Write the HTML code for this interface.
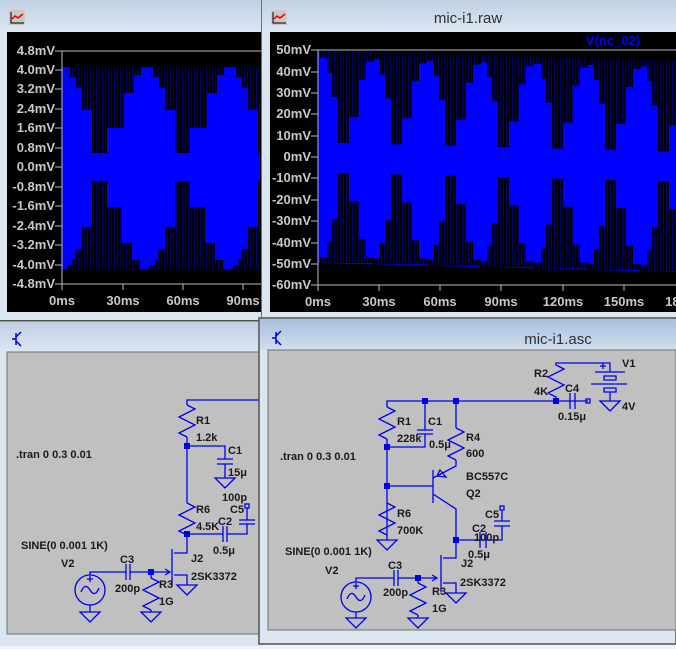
<!DOCTYPE html>
<html><head><meta charset="utf-8"><style>
html,body{margin:0;padding:0;background:#eef2f6;}
svg{display:block}
.pl{font-family:"Liberation Sans",sans-serif;font-weight:bold;font-size:13px;fill:#c8c8c8;}
.sl{font-family:"Liberation Sans",sans-serif;font-weight:bold;font-size:11px;fill:#1a1a1a;}
.t{font-family:"Liberation Sans",sans-serif;font-size:15px;fill:#303030;}
.w{stroke:#0000ee;stroke-width:1.3;fill:none}
</style></head><body>
<svg width="676" height="649" viewBox="0 0 676 649" xmlns="http://www.w3.org/2000/svg">
<defs>
<linearGradient id="tb" x1="0" y1="0" x2="0" y2="1"><stop offset="0" stop-color="#c0d0e2"/><stop offset="1" stop-color="#dde7f2"/></linearGradient>
<linearGradient id="tb2" x1="0" y1="0" x2="0" y2="1"><stop offset="0" stop-color="#a8bfdb"/><stop offset="1" stop-color="#d2e0ef"/></linearGradient>
<pattern id="st" width="3" height="4" patternUnits="userSpaceOnUse"><rect width="3" height="4" fill="#000"/><rect x="2" width="1" height="4" fill="#000070"/></pattern>
<path id="lt" d="M0,0 V10 H6 V21 H12 V43 H22 V86 H37 V61 H54 V26 H64 V8 H71 V0Z" fill="url(#st)"/>
<path id="lb" d="M0,0 V-4 H5 V-10 H8 V-20 H15 V-42 H25 V-88 H40 V-62 H55 V-26 H65 V-9 H73 V0Z" fill="url(#st)"/>
<path id="rt" d="M0,0 V6 H7 V21 H12 V45 H18 V91 H29 V65 H39 V28 H46 V10 H54 V0Z" fill="url(#st)"/>
<path id="rb" d="M0,0 V-6 H7 V-21 H12 V-44 H18 V-90 H29 V-62 H39 V-24 H46 V-6 H54 V0Z" fill="url(#st)"/>
<path id="res" d="M0,0 l8,4 l-16,8 l16,8 l-16,8 l8,4" class="w"/>
<path id="gnd" d="M-10,0 H10 L0,10 Z" class="w"/>
</defs>

<!-- TOP LEFT WINDOW -->
<rect x="0" y="0" width="263" height="320" fill="#dce6f1"/>
<rect x="0" y="0" width="263" height="32" fill="url(#tb)"/>
<g transform="translate(9,10)"><rect width="16" height="15" fill="#c8c8c8"/><path d="M2,2 V13 H15" stroke="#000" fill="none"/><path d="M3,9 L6,6 L9,8 L14,4" stroke="#e00" stroke-width="1.5" fill="none"/></g>
<rect x="7" y="32" width="256" height="280" fill="#000"/>
<rect x="62" y="67" width="198" height="202" fill="#0000ff"/>
<use href="#lt" x="70" y="67"/><use href="#lt" x="153" y="67"/><use href="#lt" x="236" y="67"/>
<use href="#lb" x="67" y="269"/><use href="#lb" x="150" y="269"/><use href="#lb" x="233" y="269"/>
<rect x="260" y="32" width="3" height="280" fill="#000"/>
<path d="M62,51 H262 M62,51 V289" stroke="#bbb" fill="none"/>
<g stroke="#bbb"><path d="M55,51H62M55,70H62M55,89H62M55,109H62M55,128H62M55,148H62M55,167H62M55,187H62M55,206H62M55,226H62M55,245H62M55,265H62M55,284H262M62,284V290M123,284V290M183,284V290M243,284V290"/></g>
<g class="pl" text-anchor="end">
<text x="55" y="55">4.8mV</text><text x="55" y="74">4.0mV</text><text x="55" y="93">3.2mV</text><text x="55" y="113">2.4mV</text><text x="55" y="132">1.6mV</text><text x="55" y="152">0.8mV</text><text x="55" y="171">0.0mV</text><text x="55" y="191">-0.8mV</text><text x="55" y="210">-1.6mV</text><text x="55" y="230">-2.4mV</text><text x="55" y="249">-3.2mV</text><text x="55" y="269">-4.0mV</text><text x="55" y="288">-4.8mV</text>
</g>
<g class="pl" text-anchor="middle"><text x="62" y="305">0ms</text><text x="123" y="305">30ms</text><text x="183" y="305">60ms</text><text x="243" y="305">90ms</text></g>

<!-- TOP RIGHT WINDOW -->
<rect x="261" y="0" width="415" height="320" fill="#dce6f1"/>
<rect x="261" y="0" width="1" height="320" fill="#707070"/>
<rect x="262" y="0" width="414" height="32" fill="url(#tb)"/>
<g transform="translate(271,10)"><rect width="16" height="15" fill="#c8c8c8"/><path d="M2,2 V13 H15" stroke="#000" fill="none"/><path d="M3,9 L6,6 L9,8 L14,4" stroke="#e00" stroke-width="1.5" fill="none"/></g>
<text class="t" x="468" y="23" text-anchor="middle">mic-i1.raw</text>
<rect x="270" y="32" width="406" height="280" fill="#000"/>
<polygon points="318,52 676,61 676,272 318,263" fill="#0000ff"/>
<use href="#rt" x="320" y="52"/><use href="#rt" x="373" y="53.4"/><use href="#rt" x="427" y="54.8"/><use href="#rt" x="480" y="56.2"/><use href="#rt" x="534" y="57.6"/><use href="#rt" x="587" y="59"/><use href="#rt" x="640" y="60.4"/>
<use href="#rb" x="320" y="263"/><use href="#rb" x="373" y="264.4"/><use href="#rb" x="427" y="265.8"/><use href="#rb" x="480" y="267.2"/><use href="#rb" x="534" y="268.6"/><use href="#rb" x="587" y="270"/><use href="#rb" x="640" y="271.4"/>
<text x="640" y="45" text-anchor="end" style="font-family:'Liberation Sans',sans-serif;font-weight:bold;font-size:13px;fill:#0000ff">V(nc_02)</text>
<path d="M318,50 H676 M318,50 V291" stroke="#bbb" fill="none"/>
<g stroke="#bbb"><path d="M311,50H318M311,72H318M311,93H318M311,114H318M311,136H318M311,157H318M311,178H318M311,200H318M311,221H318M311,243H318M311,264H318M311,285H676M318,285V291M379,285V291M440,285V291M501,285V291M563,285V291M624,285V291"/></g>
<g class="pl" text-anchor="end">
<text x="311" y="54">50mV</text><text x="311" y="76">40mV</text><text x="311" y="97">30mV</text><text x="311" y="118">20mV</text><text x="311" y="140">10mV</text><text x="311" y="161">0mV</text><text x="311" y="182">-10mV</text><text x="311" y="204">-20mV</text><text x="311" y="225">-30mV</text><text x="311" y="247">-40mV</text><text x="311" y="268">-50mV</text><text x="311" y="289">-60mV</text>
</g>
<g class="pl" text-anchor="middle"><text x="318" y="306">0ms</text><text x="379" y="306">30ms</text><text x="440" y="306">60ms</text><text x="501" y="306">90ms</text><text x="563" y="306">120ms</text><text x="624" y="306">150ms</text><text x="676" y="306">180</text></g>

<!-- BOTTOM LEFT WINDOW -->
<rect x="0" y="320" width="262" height="326" fill="#dce6f1"/>
<rect x="0" y="320" width="262" height="1.5" fill="#505050"/>
<rect x="0" y="322" width="262" height="31" fill="url(#tb)"/>
<g stroke="#0000dd" stroke-width="1.5" fill="none"><path d="M16,333V345M12,339H16M16,337L21,332M16,341L21,346"/></g>
<rect x="7" y="352" width="255" height="282" fill="#c0c0c0" stroke="#707070"/>
<g class="w">
<path d="M262,400 H187 V405"/><use href="#res" x="187" y="405"/><path d="M187,437 V503"/>
<path d="M187,446 H225 V459 M217,459 H233 M217,464 H233 M225,464 V478"/><use href="#gnd" x="225" y="478"/>
<use href="#res" x="187" y="503"/><path d="M187,535 V553 H174 M172,549 V585 M174,575 H187 V585"/><use href="#gnd" x="187" y="585"/>
<path d="M187,534 H223 M223,526 V542 M227,526 V542 M227,534 H247 V524 M239,524 H255 M239,520 H255 M247,520 V508"/>
<rect x="245" y="504" width="4" height="4"/>
<path d="M90,575 V572 H126 M126,564 V580 M130,564 V580 M130,572 H170 M165,569 L170,572 L165,575"/>
<path d="M151,572 V578"/><use href="#res" x="151" y="578"/><path d="M151,610 V612"/><use href="#gnd" x="151" y="612"/>
<circle cx="90" cy="590" r="15"/><path d="M81,592 Q85,582 90,590 T99,588 M90,605 V612 M87,579 H93 M90,576 V582"/><use href="#gnd" x="90" y="612"/>
</g>
<g fill="#0000ee"><rect x="184" y="443" width="6" height="6"/><rect x="184" y="531" width="6" height="6"/><rect x="148" y="569" width="6" height="6"/></g>
<g class="sl">
<text x="196" y="424">R1</text><text x="196" y="441">1.2k</text><text x="228" y="454">C1</text><text x="228" y="476">15μ</text>
<text x="196" y="513">R6</text><text x="196" y="530">4.5K</text><text x="222" y="501">100p</text><text x="230" y="513">C5</text><text x="218" y="525">C2</text><text x="213" y="554">0.5μ</text>
<text x="191" y="562">J2</text><text x="191" y="580">2SK3372</text><text x="120" y="563">C3</text><text x="115" y="592">200p</text><text x="159" y="588">R3</text><text x="159" y="605">1G</text>
<text x="61" y="567">V2</text><text x="21" y="549">SINE(0 0.001 1K)</text><text x="16" y="458">.tran 0 0.3 0.01</text>
</g>

<!-- BOTTOM RIGHT WINDOW -->
<rect x="259" y="318" width="417" height="326" fill="#dce6f1"/>
<rect x="259" y="318" width="417" height="326" fill="none" stroke="#505050" stroke-width="1.5"/>
<rect x="260" y="319" width="416" height="32" fill="url(#tb2)"/>
<g stroke="#0000dd" stroke-width="1.5" fill="none"><path d="M276,332V344M272,338H276M276,336L281,331M276,340L281,345"/></g>
<text class="t" x="558" y="344" text-anchor="middle">mic-i1.asc</text>
<rect x="268" y="350" width="408" height="280" fill="#c0c0c0" stroke="#707070"/>
<g class="w">
<path d="M387,407 V401 H588 M570,393 V409 M575,393 V409"/><rect x="586" y="399" width="4" height="4"/>
<path d="M556,401 V397 l-8,-4 l16,-8 l-16,-8 l16,-8 l-8,-4 V363 H610 V372 M595,372 H625 M604,376 H616 V380 H604 Z M591,384 H627 M604,388 H616 V392 H604 Z M610,392 V401"/><use href="#gnd" x="610" y="401"/>
<path d="M600,366 H606 M603,363 V369"/>
<use href="#res" x="387" y="407"/><path d="M387,439 V540"/><use href="#gnd" x="387" y="540"/>
<path d="M425,401 V430 M417,430 H433 M417,434 H433 M425,434 V447 H387"/>
<path d="M456,401 V428"/><use href="#res" x="456" y="428"/><path d="M456,460 V466 L433,478 M440,470 L446,477 L437,476 Z"/>
<path d="M387,486 H433 M433,470 V503 M433,494 L456,509 V558 H443 M441,555 V592 M443,583 H456 V593"/><use href="#gnd" x="456" y="593"/>
<use href="#res" x="387" y="503"/>
<path d="M456,540 H502 V526 M494,526 H510 M494,521 H510 M502,521 V511 M480,532 V548 M486,532 V548"/><rect x="500" y="506" width="4" height="4"/>
<path d="M356,582 V578 H394 M394,570 V586 M398,570 V586 M398,578 H437 M432,575 L437,578 L432,581"/>
<path d="M418,578 V583"/><use href="#res" x="418" y="583"/><path d="M418,615 V618"/><use href="#gnd" x="418" y="618"/>
<circle cx="356" cy="597" r="15"/><path d="M347,599 Q351,589 356,597 T365,595 M356,612 V618 M353,586 H359 M356,583 V589"/><use href="#gnd" x="356" y="618"/>
</g>
<g fill="#0000ee"><rect x="422" y="398" width="6" height="6"/><rect x="453" y="398" width="6" height="6"/><rect x="553" y="398" width="6" height="6"/><rect x="384" y="444" width="6" height="6"/><rect x="384" y="483" width="6" height="6"/><rect x="453" y="537" width="6" height="6"/><rect x="415" y="575" width="6" height="6"/></g>
<g class="sl">
<text x="622" y="367">V1</text><text x="622" y="410">4V</text><text x="534" y="377">R2</text><text x="534" y="395">4K</text><text x="565" y="392">C4</text><text x="558" y="420">0.15μ</text>
<text x="397" y="425">R1</text><text x="397" y="442">228k</text><text x="428" y="425">C1</text><text x="429" y="448">0.5μ</text>
<text x="466" y="441">R4</text><text x="466" y="457">600</text><text x="466" y="480">BC557C</text><text x="466" y="497">Q2</text>
<text x="397" y="517">R6</text><text x="397" y="534">700K</text><text x="485" y="518">C5</text><text x="472" y="532">C2</text><text x="474" y="541">100p</text><text x="468" y="558">0.5μ</text>
<text x="461" y="567">J2</text><text x="460" y="586">2SK3372</text><text x="388" y="569">C3</text><text x="383" y="596">200p</text><text x="432" y="595">R3</text><text x="432" y="612">1G</text>
<text x="325" y="574">V2</text><text x="285" y="555">SINE(0 0.001 1K)</text><text x="280" y="460">.tran 0 0.3 0.01</text>
</g>
</svg>
</body></html>
